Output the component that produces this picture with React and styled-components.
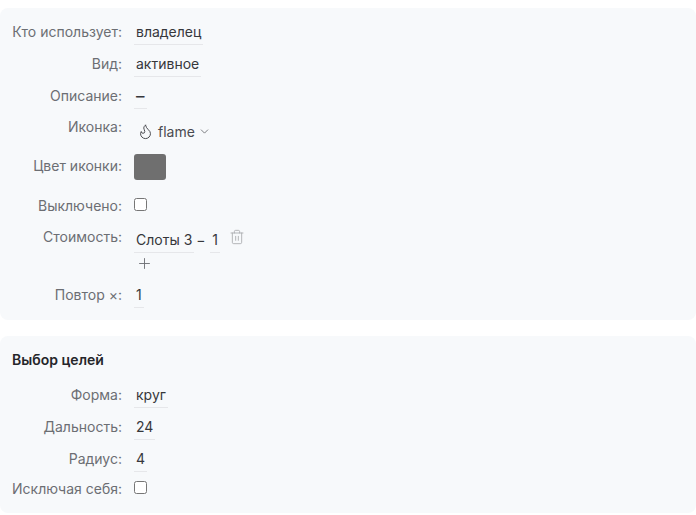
import React from "react";
import styled, { createGlobalStyle } from "styled-components";
import { ChevronDown, Flame, Plus, Trash2 } from "lucide-react";

const GlobalStyle = createGlobalStyle`
  html, body {
    margin: 0;
    background: #fff;
    font-family: Inter, sans-serif;
    font-size: 14px;
    color: #2f3033;
    overflow: hidden;
  }
`;

const Page = styled.div`
  display: flex;
  flex-direction: column;
  gap: 16px;
  padding-top: 8px;
`;

const Panel = styled.section`
  background: #f7f9fb;
  border-radius: 8px;
  padding: ${(p) => p.$padding};
  display: flex;
  flex-direction: column;
`;

const Heading = styled.h3`
  margin: 0 0 13px;
  font-size: 14px;
  line-height: 20px;
  font-weight: 600;
  color: #25262a;
`;

const Row = styled.div`
  display: flex;
  gap: 12px;
  height: ${(p) => p.$height || 32}px;
`;

const Label = styled.div`
  width: 110px;
  flex: none;
  text-align: right;
  color: #6c6e73;
  line-height: 24px;
  margin-top: ${(p) => p.$top || 0}px;
  white-space: nowrap;
`;

const Value = styled.div`
  padding: 0 2px;
  height: 24px;
  line-height: 24px;
  font-size: ${(p) => p.$size || 14}px;
  border-bottom: 1px solid #e6e7ea;
  color: #36373b;
  white-space: nowrap;
`;

const IconSelect = styled.div`
  display: flex;
  align-items: center;
  height: 24px;
  margin-top: 3px;
  padding-left: 3px;
  color: #4a4b50;
`;

const SelectText = styled.span`
  margin-left: 4px;
  margin-right: 3px;
`;

const Swatch = styled.div`
  width: 32px;
  height: 26px;
  border-radius: 3px;
  background: #6f6f6f;
`;

const CheckBox = styled.input.attrs({ type: "checkbox" })`
  appearance: none;
  width: 13px;
  height: 13px;
  margin: 4px 0 0;
  background: #fff;
  border: 1px solid #767676;
  border-radius: 2.5px;
  box-sizing: border-box;
`;

const CostColumn = styled.div`
  display: flex;
  flex-direction: column;
  margin-top: 3px;
`;

const CostLine = styled.div`
  display: flex;
  align-items: flex-start;
`;

const Dash = styled.span`
  width: 16px;
  padding-left: 2px;
  box-sizing: border-box;
  line-height: 24px;
  color: #36373b;
`;

const TrashButton = styled.span`
  display: flex;
  margin: 1px 0 0 9px;
  color: #a9aaae;
`;

const AddButton = styled.div`
  display: flex;
  padding: 2px 0 0 2px;
  color: #6c6e73;
`;

const rowsTop = [
  ["Кто использует:", "владелец"],
  ["Вид:", "активное"],
  ["Описание:", "–", 17],
];

const rowsTarget = [
  ["Форма:", "круг", 32],
  ["Дальность:", "24", 32],
  ["Радиус:", "4", 30],
];

const App = () => (
  <Page>
    <GlobalStyle />
    <Panel $padding="12px 12px 5px">
      {rowsTop.map(([label, value, size]) => (
        <Row key={label}>
          <Label>{label}</Label>
          <Value $size={size}>{value}</Value>
        </Row>
      ))}
      <Row $height={38}>
        <Label $top={-1}>Иконка:</Label>
        <IconSelect>
          <Flame size={17} strokeWidth={1.4} />
          <SelectText>flame</SelectText>
          <ChevronDown size={13} strokeWidth={1.3} />
        </IconSelect>
      </Row>
      <Row $height={40}>
        <Label>Цвет иконки:</Label>
        <Swatch />
      </Row>
      <Row $height={31}>
        <Label>Выключено:</Label>
        <CheckBox />
      </Row>
      <Row $height={58}>
        <Label>Стоимость:</Label>
        <CostColumn>
          <CostLine>
            <Value>Слоты 3</Value>
            <Dash>−</Dash>
            <Value>1</Value>
            <TrashButton>
              <Trash2 size={16} strokeWidth={1.3} />
            </TrashButton>
          </CostLine>
          <AddButton>
            <Plus size={17} strokeWidth={1.3} />
          </AddButton>
        </CostColumn>
      </Row>
      <Row>
        <Label>Повтор ×:</Label>
        <Value>1</Value>
      </Row>
    </Panel>
    <Panel $padding="14px 12px 4px">
      <Heading>Выбор целей</Heading>
      {rowsTarget.map(([label, value, height]) => (
        <Row key={label} $height={height}>
          <Label>{label}</Label>
          <Value>{value}</Value>
        </Row>
      ))}
      <Row>
        <Label>Исключая себя:</Label>
        <CheckBox />
      </Row>
    </Panel>
  </Page>
);

export default App;
